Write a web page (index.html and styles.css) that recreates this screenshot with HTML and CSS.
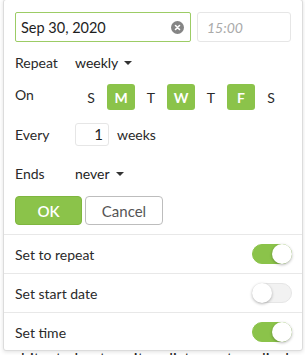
FILE: index.html
```html
<!DOCTYPE html>
<html>
<head>
<meta charset="utf-8">
<link rel="stylesheet" href="styles.css">
</head>
<body>
<div class="bg-text">
  <p>architecto beatae vitae dicta sunt explicabo nemo</p>
</div>

<div class="popup">
  <div class="editor">
    <div class="inputs">
      <div class="date-input">
        <span class="date-value">Sep 30, 2020</span>
        <span class="clear">
          <svg width="13" height="13" viewBox="0 0 13 13"><circle cx="6.5" cy="6.5" r="6.5" fill="#858585"/><path d="M4.5 4.5 L8.5 8.5 M8.5 4.5 L4.5 8.5" stroke="#fff" stroke-width="1.6" stroke-linecap="round"/></svg>
        </span>
      </div>
      <div class="time-input">15:00</div>
    </div>

    <div class="row row-repeat">
      <span class="label">Repeat</span>
      <span class="select">weekly <span class="caret"></span></span>
    </div>

    <div class="row row-on">
      <span class="label">On</span>
      <div class="days">
        <span class="day">S</span>
        <span class="day on">M</span>
        <span class="day">T</span>
        <span class="day on">W</span>
        <span class="day">T</span>
        <span class="day on">F</span>
        <span class="day">S</span>
      </div>
    </div>

    <div class="row row-every">
      <span class="label">Every</span>
      <span class="num-input">1</span>
      <span class="unit">weeks</span>
    </div>

    <div class="row row-ends">
      <span class="label">Ends</span>
      <span class="select">never <span class="caret"></span></span>
    </div>

    <div class="buttons">
      <button class="btn btn-ok">OK</button>
      <button class="btn btn-cancel">Cancel</button>
    </div>
  </div>

  <div class="toggle-row">
    <span class="toggle-label">Set to repeat</span>
    <span class="toggle on"><span class="knob"></span></span>
  </div>
  <div class="toggle-row">
    <span class="toggle-label">Set start date</span>
    <span class="toggle"><span class="knob"></span></span>
  </div>
  <div class="toggle-row">
    <span class="toggle-label">Set time</span>
    <span class="toggle on"><span class="knob"></span></span>
  </div>
</div>
</body>
</html>
```

FILE: styles.css
```css
html, body {
  margin: 0;
  padding: 0;
  background: #fff;
  overflow: hidden;
  height: 355px;
}

body {
  position: relative;
  font-family: Lato, "Liberation Sans", sans-serif;
  color: #333;
}

.bg-text {
  padding-top: 348px;
  width: 305px;
  height: 7px;
  overflow: hidden;
}

.bg-text p {
  margin: 0;
  font-size: 16px;
  line-height: 20px;
  color: #222;
  white-space: nowrap;
}

.popup {
  position: absolute;
  left: 3px;
  top: -1px;
  width: 300px;
  height: 352px;
  box-sizing: border-box;
  background: #fff;
  border: 1px solid #dcdcdc;
  border-radius: 3px;
  box-shadow: 0 1px 4px rgba(0, 0, 0, 0.12);
}

.editor {
  padding: 12px 11px 9px 11px;
}

.inputs {
  display: flex;
  gap: 6px;
  height: 30px;
}

.date-input {
  width: 176px;
  box-sizing: border-box;
  border: 1px solid #9ccc65;
  border-radius: 2px;
  display: flex;
  align-items: center;
  justify-content: space-between;
  padding: 0 6px 0 5px;
  font-size: 14.5px;
  color: #1e1e1e;
}

.clear {
  display: flex;
}

.time-input {
  width: 94px;
  box-sizing: border-box;
  border: 1px solid #e6e6e6;
  border-radius: 3px;
  display: flex;
  align-items: center;
  padding-left: 9px;
  font-size: 14px;
  font-style: italic;
  color: #aaa;
}

.row {
  display: flex;
  align-items: center;
  font-size: 14px;
}

.label {
  width: 60px;
  flex: none;
  color: #2a2a2a;
}

.row-repeat {
  margin-top: 8px;
  height: 24px;
}

.select {
  display: flex;
  align-items: center;
  color: #1e1e1e;
}

.caret {
  display: inline-block;
  width: 0;
  height: 0;
  margin-left: 6px;
  margin-top: 2px;
  border-left: 4px solid transparent;
  border-right: 4px solid transparent;
  border-top: 4px solid #333;
}

.row-on {
  margin-top: 10px;
  height: 26px;
  align-items: flex-start;
}

.row-on .label {
  line-height: 22px;
}

.days {
  display: flex;
  margin-left: 1px;
}

.day {
  width: 28px;
  height: 26px;
  margin: 0 1px;
  display: flex;
  align-items: center;
  justify-content: center;
  border-radius: 3px;
  font-size: 14px;
  color: #2a2a2a;
}

.day.on {
  background: #8bc34a;
  color: #fff;
  font-weight: 700;
}

.row-every {
  margin-top: 13px;
  height: 23px;
}

.num-input {
  width: 34px;
  height: 23px;
  box-sizing: border-box;
  border: 1px solid #e6e6e6;
  border-radius: 3px;
  text-align: right;
  padding-right: 5px;
  line-height: 21px;
  font-size: 15px;
  color: #1e1e1e;
}

.unit {
  margin-left: 8px;
  color: #2a2a2a;
}

.row-ends {
  margin-top: 15px;
  height: 24px;
}

.buttons {
  display: flex;
  gap: 3px;
  margin-top: 11px;
}

.btn {
  height: 29px;
  border-radius: 4px;
  font-family: Lato, "Liberation Sans", sans-serif;
  font-size: 15px;
  padding: 0;
  box-sizing: border-box;
}

.btn-ok {
  width: 67px;
  background: #8bc34a;
  border: 1px solid #7fb63f;
  color: #fff;
  font-weight: 600;
}

.btn-cancel {
  width: 78px;
  background: #fff;
  border: 1px solid #bdbdbd;
  color: #555;
}

.toggle-row {
  height: 38px;
  border-top: 1px solid #e8e8e8;
  display: flex;
  align-items: center;
  justify-content: space-between;
  padding: 0 10px 0 11px;
  font-size: 14px;
  color: #2a2a2a;
}

.toggle {
  width: 40px;
  height: 20px;
  border-radius: 10px;
  background: #f2f2f2;
  border: 1px solid #e6e6e6;
  box-sizing: border-box;
  display: flex;
  align-items: center;
  justify-content: flex-start;
  margin-top: -1px;
}

.toggle.on {
  background: #8bc34a;
  border-color: #8bc34a;
  justify-content: flex-end;
}

.knob {
  width: 20px;
  height: 20px;
  flex: none;
  border-radius: 50%;
  background: #fff;
  box-shadow: 0 1px 3px rgba(0, 0, 0, 0.3);
  margin: -1px;
}
```
